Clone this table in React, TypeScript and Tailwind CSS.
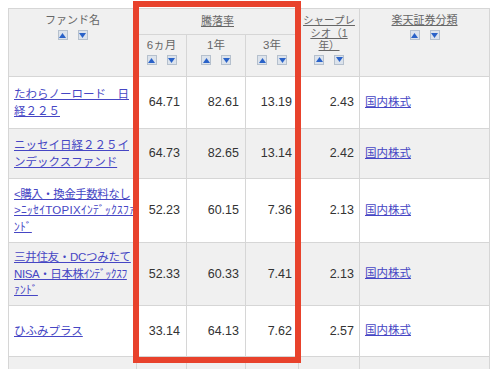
import React from 'react'

interface Fund {
  lines: [string, string][]
  m6: string
  y1: string
  y3: string
  sharpe: string
  category: string
  h: string
}

// each line: [text, tracking class]
const FUNDS: Fund[] = [
  { lines: [['たわらノーロード　日', ''], ['経２２５', '']], m6: '64.71', y1: '82.61', y3: '13.19', sharpe: '2.43', category: '国内株式', h: 'h-[52px]' },
  { lines: [['ニッセイ日経２２５イ', ''], ['ンデックスファンド', '']], m6: '64.73', y1: '82.65', y3: '13.14', sharpe: '2.42', category: '国内株式', h: 'h-[50px]' },
  { lines: [['<購入・換金手数料なし', 'tracking-[-0.5px]'], ['>ﾆｯｾｲTOPIXｲﾝﾃﾞｯｸｽﾌｧ', 'tracking-[0.3px]'], ['ﾝﾄﾞ', 'tracking-[0.3px]']], m6: '52.23', y1: '60.15', y3: '7.36', sharpe: '2.13', category: '国内株式', h: 'h-[64px]' },
  { lines: [['三井住友・DCつみたて', 'tracking-[-0.3px]'], ['NISA・日本株ｲﾝﾃﾞｯｸｽﾌ', 'tracking-[-0.4px]'], ['ｧﾝﾄﾞ', 'tracking-[0.3px]']], m6: '52.33', y1: '60.33', y3: '7.41', sharpe: '2.13', category: '国内株式', h: 'h-[63px]' },
  { lines: [['ひふみプラス', '']], m6: '33.14', y1: '64.13', y3: '7.62', sharpe: '2.57', category: '国内株式', h: 'h-[51px]' },
]

function SortButtons() {
  return (
    <div className="flex justify-center gap-[10px] mt-[3px]">
      {['up', 'down'].map(d => (
        <span key={d} className="w-[10px] h-[10px] bg-[#dce3ec] border border-[#b5c0cd] flex items-center justify-center">
          <svg width="7" height="5" viewBox="0 0 7 5">
            {d === 'up'
              ? <polygon points="3.5,0 7,5 0,5" fill="#2a62c8" />
              : <polygon points="0,0 7,0 3.5,5" fill="#2a62c8" />}
          </svg>
        </span>
      ))}
    </div>
  )
}

export default function App() {
  return (
    <div className="relative w-[500px] h-[369px] overflow-hidden bg-white font-['Liberation_Sans','Noto_Sans_CJK_JP',sans-serif]">
      <div className="pt-[8px] pl-[8px]">
        <table className="table-fixed border-collapse w-[481px] text-[#333]">
          <colgroup>
            <col className="w-[128px]" />
            <col className="w-[50px]" />
            <col className="w-[59px]" />
            <col className="w-[53px]" />
            <col className="w-[61px]" />
            <col className="w-[130px]" />
          </colgroup>
          <thead>
            <tr className="h-[26px] bg-[#f0f0f0] text-[11px] leading-[13px] text-[#666]">
              <th rowSpan={2} className="border border-[#d6d6d6] align-top font-normal pt-[5px]">
                ファンド名
                <SortButtons />
              </th>
              <th colSpan={3} className="border border-[#d6d6d6] font-normal">
                <span className="underline">騰落率</span>
              </th>
              <th rowSpan={2} className="border border-[#d6d6d6] align-top font-normal pt-[5px] text-[10.5px] leading-[12.5px]">
                <span className="underline">シャープレ<br />シオ（1<br />年）</span>
                <SortButtons />
              </th>
              <th rowSpan={2} className="border border-[#d6d6d6] align-top font-normal pt-[5px]">
                <span className="underline">楽天証券分類</span>
                <SortButtons />
              </th>
            </tr>
            <tr className="h-[42px] bg-[#f0f0f0] text-[11.5px] leading-[13px] text-[#666]">
              {['6ヵ月', '1年', '3年'].map(p => (
                <th key={p} className="border border-[#d6d6d6] align-top font-normal pt-[4px]">
                  {p}
                  <SortButtons />
                </th>
              ))}
            </tr>
          </thead>
          <tbody>
            {FUNDS.map((f, i) => (
              <tr key={i} className={`${f.h} ${i % 2 === 1 ? 'bg-[#f0f0f0]' : 'bg-white'}`}>
                <td className="border border-[#d6d6d6] px-[5px] text-[11.5px] leading-[16.5px]">
                  {f.lines.map(([text, tr], j) => (
                    <div key={j} className={`whitespace-nowrap ${tr}`}>
                      <a className="text-[#4646c4] underline">{text}</a>
                    </div>
                  ))}
                </td>
                <td className="border border-[#d6d6d6] pr-[6px] text-right text-[12.5px]">{f.m6}</td>
                <td className="border border-[#d6d6d6] pr-[6px] text-right text-[12.5px]">{f.y1}</td>
                <td className="border border-[#d6d6d6] pr-[6px] text-right text-[12.5px]">{f.y3}</td>
                <td className="border border-[#d6d6d6] pr-[5px] text-right text-[12.5px]">{f.sharpe}</td>
                <td className="border border-[#d6d6d6] pl-[5px] text-[11.5px]">
                  <a className="text-[#4646c4] underline">{f.category}</a>
                </td>
              </tr>
            ))}
            <tr className="h-[40px] bg-[#f0f0f0]">
              {[0, 1, 2, 3, 4, 5].map(k => (
                <td key={k} className="border border-[#d6d6d6]" />
              ))}
            </tr>
          </tbody>
        </table>
      </div>
      {/* highlight frame over the return columns */}
      <div className="absolute left-[133px] top-[1px] w-[168px] h-[362px] border-[6px] border-[#e8422c] pointer-events-none" />
    </div>
  )
}
